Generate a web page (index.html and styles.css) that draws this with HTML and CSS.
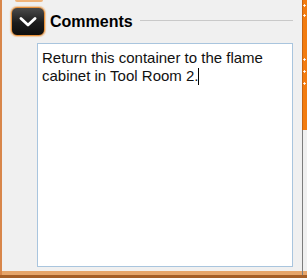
FILE: index.html
```html
<!DOCTYPE html>
<html>
<head>
<meta charset="utf-8">
<link rel="stylesheet" href="styles.css">
</head>
<body>
<div class="page">
  <div class="main">
    <div class="prev-tab"></div>
    <div class="header">
      <button class="toggle" aria-label="Collapse">
        <svg width="18" height="10" viewBox="0 0 18 10"><polyline points="2,1.5 9,8 16,1.5" fill="none" stroke="#fff" stroke-width="2.8" stroke-linecap="round" stroke-linejoin="round"/></svg>
      </button>
      <span class="title">Comments</span>
      <span class="rule"></span>
    </div>
    <div class="comments-box">Return this container to the flame cabinet in Tool Room 2.<span class="caret"></span></div>
  </div>
  <div class="scrollbar"><div class="thumb"></div></div>
</div>
</body>
</html>
```
FILE: styles.css
```css
html, body {
  margin: 0;
  padding: 0;
  background: #f0f0f0;
}
.page {
  width: 307px;
  height: 278px;
  box-sizing: border-box;
  display: flex;
  border-bottom: 3px solid #a55f27;
  box-shadow: inset 0 -4px 0 #e6a56a;
  background: #f0f0f0;
  font-family: "Liberation Sans", Arial, sans-serif;
}
.main {
  flex: 1;
  box-sizing: border-box;
  border-left: 2px solid #d8864a;
  display: flex;
  flex-direction: column;
}
.prev-tab {
  width: 28px;
  height: 2px;
  margin-left: 13px;
  background: #f1b47a;
  border-radius: 0 0 4px 4px;
}
.header {
  display: flex;
  align-items: center;
  margin: 5px 9px 0 9px;
}
.toggle {
  width: 34px;
  height: 29px;
  box-sizing: border-box;
  padding: 0;
  border: 1px solid #e8913a;
  border-radius: 6px;
  background: linear-gradient(#4a4a4a, #1c1c1c 55%, #0e0e0e);
  box-shadow: 0 0 1px 1px rgba(240, 150, 60, 0.45);
  display: flex;
  align-items: center;
  justify-content: center;
}
.toggle svg {
  display: block;
  margin-top: 1px;
}
.title {
  font-size: 16px;
  font-weight: bold;
  color: #000;
  margin-left: 5px;
  margin-top: 1px;
}
.rule {
  flex: 1;
  height: 1px;
  background: #c9c9c9;
  margin-left: 7px;
  margin-top: -3px;
}
.comments-box {
  margin: 7px 9px 0 35px;
  height: 224px;
  box-sizing: border-box;
  border: 1px solid #a9c5de;
  background: #fff;
  padding: 5px 4px 0 4px;
  font-size: 15px;
  line-height: 18px;
  color: #111;
}
.caret {
  display: inline-block;
  width: 1px;
  height: 17px;
  background: #000;
  vertical-align: -4px;
}
.scrollbar {
  width: 5px;
  box-sizing: border-box;
  border-left: 1px solid #7d7d7d;
}
.thumb {
  height: 130px;
  margin-left: -1px;
  border-left: 1px solid #c86410;
  background-color: #f27c10;
  background-image:
    radial-gradient(circle, #fff 0.9px, transparent 1.4px),
    radial-gradient(circle, #fff 0.9px, transparent 1.4px),
    radial-gradient(circle, #fff 0.9px, transparent 1.4px),
    radial-gradient(circle, #fff 0.9px, transparent 1.4px),
    radial-gradient(circle, #fff 0.9px, transparent 1.4px);
  background-size: 3px 3px;
  background-repeat: no-repeat;
  background-position: 0 4px, 0 14px, 0 58px, 0 70px, 0 82px;
}
```
